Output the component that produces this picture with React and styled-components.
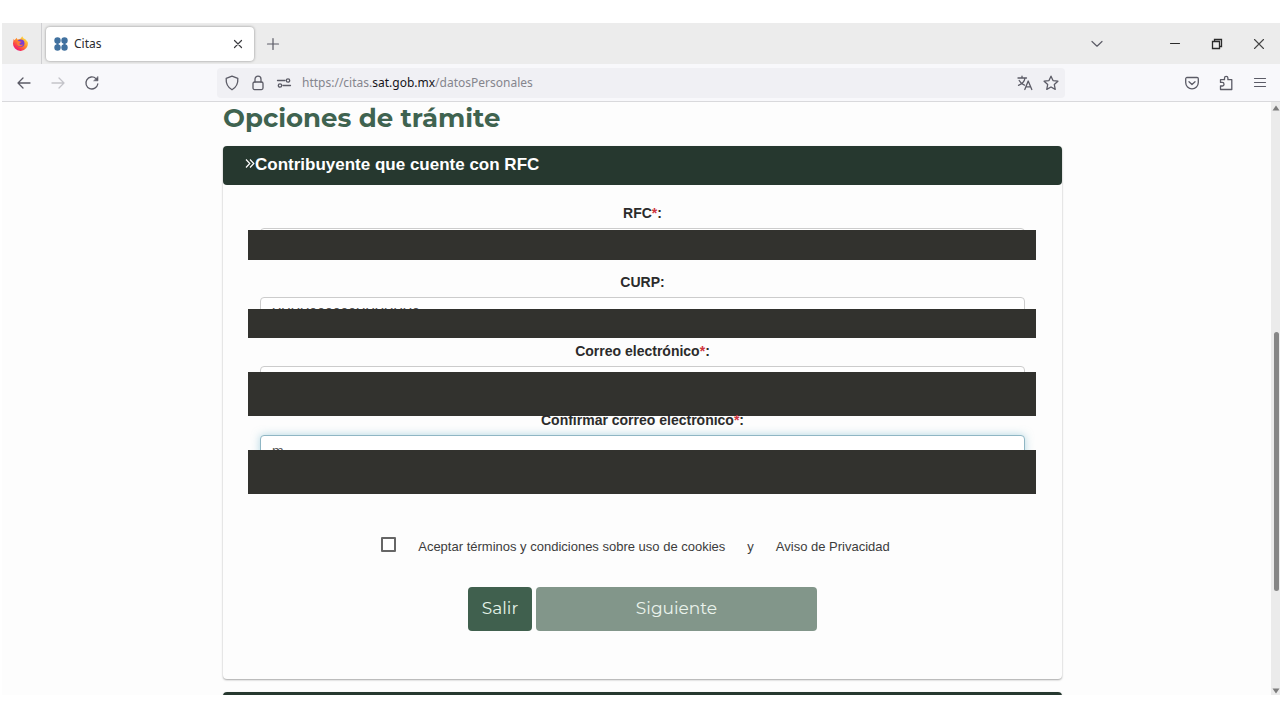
import React, { useState } from 'react'
import styled, { createGlobalStyle } from 'styled-components'

const GlobalStyle = createGlobalStyle`
    * {
        box-sizing: border-box;
    }

    body {
        margin: 0;
        background: #ffffff;
        font-family: "Liberation Sans", Arial, sans-serif;
    }

    button, input {
        font-family: inherit;
        margin: 0;
    }

    svg {
        flex: none;
    }
`

const Screen = styled.div`
    height: 100vh;
    padding: 23px 0 25px 2px;
    display: flex;
    flex-direction: column;
`

/* browser chrome */

const TabStrip = styled.header`
    flex: none;
    height: 41px;
    display: flex;
    align-items: center;
    background: #ececec;
`

const PinnedTab = styled.button`
    width: 40px;
    height: 41px;
    padding: 0 3px 0 0;
    display: flex;
    align-items: center;
    justify-content: center;
    border: none;
    border-right: 1px solid #cfcfd2;
    background: none;
`

const Tab = styled.div`
    width: 208px;
    height: 34px;
    margin: 0 0 0 4px;
    padding: 0 4px 0 8px;
    display: flex;
    align-items: center;
    gap: 6px;
    border-radius: 4px;
    background: #ffffff;
    box-shadow: 0 0 3px rgba(0, 0, 0, 0.4);
`

const TabTitle = styled.span`
    flex: 1;
    font-family: "Noto Sans", sans-serif;
    font-size: 12px;
    line-height: 18px;
    color: #2a2a2e;
`

const IconButton = styled.button`
    width: 24px;
    height: 24px;
    padding: 0;
    display: flex;
    align-items: center;
    justify-content: center;
    border: none;
    background: none;
    color: ${props => props.$color || '#5b5b66'};
    cursor: pointer;
`

const NewTab = styled(IconButton)`
    margin-left: 7px;
`

const WindowControls = styled.div`
    margin-left: auto;
    display: flex;
    align-items: center;
`

const WindowButton = styled(IconButton)`
    width: 42px;
`

const TabList = styled(WindowButton)`
    margin-right: 36px;
`

const Toolbar = styled.nav`
    flex: none;
    height: 38px;
    display: grid;
    grid-template-columns: 1fr minmax(0, 848px) 1fr;
    align-items: center;
    background: #f8f8fb;
    border-bottom: 1px solid #d9d9dc;
`

const ToolGroup = styled.div`
    display: flex;
    gap: 10px;
    padding: 0 8px 0 10px;
    justify-content: ${props => props.$end ? 'flex-end' : 'flex-start'};
`

const AddressBar = styled.div`
    height: 30px;
    padding: 0 2px 0 3px;
    display: flex;
    align-items: center;
    gap: 2px;
    border-radius: 4px;
    background: #f0f0f4;
`

const Address = styled.div`
    flex: 1;
    padding-left: 4px;
    font-family: "Noto Sans", sans-serif;
    font-size: 12px;
    line-height: 18px;
    color: #85858d;
    white-space: nowrap;
`

const Domain = styled.span`
    color: #15141a;
`

/* page */

const Viewport = styled.div`
    flex: 1;
    min-height: 0;
    display: flex;
    background: #fdfdfd;
`

const Page = styled.main`
    flex: 1;
    overflow: hidden;
    padding-left: 12px;
`

const Content = styled.div`
    max-width: 839px;
    margin: 0 auto;
`

const Title = styled.h1`
    margin: 0;
    height: 44px;
    font-family: Montserrat, Inter, sans-serif;
    font-size: 26px;
    font-weight: 700;
    line-height: 32px;
    color: #3f6350;
`

const Panel = styled.section`
    margin-bottom: 13px;
    border-radius: 4px;
    background: #fdfdfd;
    box-shadow: 0 1px 2px rgba(0, 0, 0, 0.35);
`

const PanelHeader = styled.h2`
    margin: 0;
    height: 39px;
    padding: 0 22px 2px;
    display: flex;
    align-items: center;
    border-radius: 4px;
    background: #26382f;
    color: #ffffff;
    font-size: 17px;
    line-height: 20px;
`

const Form = styled.form`
    padding: 18px 37px 48px;
`

const Field = styled.div`
    position: relative;
    height: 69px;
`

const Label = styled.label`
    display: block;
    height: 25px;
    font-size: 14px;
    font-weight: bold;
    line-height: 20px;
    text-align: center;
    color: #2b2b2b;
`

const Required = styled.span`
    color: #d0343f;
`

const Input = styled.input`
    display: block;
    width: 100%;
    height: 32px;
    padding: 0 11px;
    border: 1px solid ${props => props.$active ? '#8fb6c4' : '#cccccc'};
    border-radius: 4px;
    background: #ffffff;
    box-shadow: ${props => props.$active ? '0 0 8px rgba(102, 175, 200, 0.5)' : 'none'};
    font-size: 14px;
    color: #555555;
    outline: none;
`

const Cover = styled.div`
    position: absolute;
    left: -12px;
    right: -11px;
    top: ${props => props.$top}px;
    height: ${props => props.$height}px;
    background: #32322e;
`

const Terms = styled.div`
    margin: 55px 14px 0 0;
    height: 24px;
    display: flex;
    align-items: center;
    justify-content: center;
    gap: 22px;
    font-size: 13px;
    color: #3c3c3c;
`

const Checkbox = styled.input`
    appearance: none;
    width: 15px;
    height: 15px;
    margin-bottom: 3px;
    border: 2px solid #666666;
    border-radius: 1px;
    background: #ffffff;

    &:checked {
        background: #3f6350;
    }
`

const Link = styled.a`
    color: inherit;
    text-decoration: none;
`

const Actions = styled.div`
    margin-top: 29px;
    display: flex;
    justify-content: center;
    gap: 4px;
`

const Button = styled.button`
    width: ${props => props.$wide ? 281 : 64}px;
    height: 44px;
    padding: 0 0 2px;
    border: none;
    border-radius: 4px;
    background: ${props => props.$wide ? '#82968a' : '#40604e'};
    color: ${props => props.$wide ? '#eaf3ec' : '#e4f3e8'};
    font-family: Montserrat, Inter, sans-serif;
    font-size: 17px;
`

const Scrollbar = styled.div`
    width: 9px;
    padding: 2px 0 0;
    display: flex;
    flex-direction: column;
    align-items: center;
    background: #ebebeb;
`

const Space = styled.div`
    flex: ${props => props.$grow} 0 0;
`

const Thumb = styled.div`
    flex: 258 0 0;
    width: 5px;
    margin-left: 2px;
    border-radius: 3px;
    background: #868686;
`

const Icon = ({ size = 16, width = 1.3, children }) => (
    <svg width={size} height={size} viewBox="0 0 16 16" fill="none" stroke="currentColor"
        strokeWidth={width} strokeLinecap="round" strokeLinejoin="round" aria-hidden="true">
        {children}
    </svg>
)

const FirefoxLogo = () => (
    <svg width="17" height="17" viewBox="0 0 16 16" aria-hidden="true">
        <defs>
            <linearGradient id="flame" x1="0.85" y1="0.1" x2="0.2" y2="0.95">
                <stop offset="0" stopColor="#ffe23f" />
                <stop offset="0.45" stopColor="#ff8a2b" />
                <stop offset="0.8" stopColor="#fb3550" />
                <stop offset="1" stopColor="#e31587" />
            </linearGradient>
        </defs>
        <path d="M1.6 3.6 2.4 5 4.4 2.6 5 4.2 8 3.6 9.6 1.2 11 3.2 12.6 4 14.8 6.6A7 7 0 1 1 1 7.2Z" fill="url(#flame)" />
        <circle cx="8.2" cy="7.8" r="3.5" fill="#7b3fd1" />
        <path d="M4.6 6.2C6 5 7.4 6.6 9 6.2 8.6 7.4 7 7.4 7 8.4 7.6 9.6 9.4 9.4 10.4 8.6 10 10.8 6.4 11.6 4.8 9.2Z" fill="#ff7a35" />
    </svg>
)

const CitasLogo = () => (
    <svg width="14" height="14" viewBox="0 0 14 14" fill="#41719f" aria-hidden="true">
        <circle cx="3.5" cy="3.5" r="3.2" />
        <circle cx="10.5" cy="3.5" r="3.2" />
        <circle cx="3.5" cy="10.5" r="3.2" />
        <circle cx="10.5" cy="10.5" r="3.2" />
        <path d="M2.5 3h2v8h-2zM9.5 3h2v8h-2z" />
    </svg>
)

const Arrow = ({ down }) => (
    <svg width="9" height="8" viewBox="0 0 9 8" fill="#7c7c7c" aria-hidden="true">
        <path d={down ? 'M1.5 1.5h7L5 6.5z' : 'M1.5 6.5h7L5 1.5z'} />
    </svg>
)

const FormField = ({ id, label, required, value, active, top, height }) => {
    const [text, setText] = useState(value || '')

    return (
        <Field>
            <Label htmlFor={id}>{label}{required && <Required>*</Required>}:</Label>
            <Input id={id} value={text} $active={active} onChange={e => setText(e.target.value)} />
            <Cover $top={top} $height={height} />
        </Field>
    )
}

const Browser = () => (
    <>
        <TabStrip>
            <PinnedTab aria-label="Firefox"><FirefoxLogo /></PinnedTab>
            <Tab>
                <CitasLogo />
                <TabTitle>Citas</TabTitle>
                <IconButton aria-label="Cerrar pestaña" $color="#3c3c40">
                    <Icon size={14} width={1.4}><path d="M4 4l8 8M12 4l-8 8" /></Icon>
                </IconButton>
            </Tab>
            <NewTab aria-label="Nueva pestaña">
                <Icon width={1.2}><path d="M8 2.5v11M2.5 8h11" /></Icon>
            </NewTab>
            <WindowControls>
                <TabList aria-label="Listar pestañas">
                    <Icon width={1.2}><path d="M3 5.5 8 10.2l5-4.7" /></Icon>
                </TabList>
                <WindowButton $color="#2a2a2a" aria-label="Minimizar">
                    <Icon width={1.1}><path d="M3.5 7.5h9" /></Icon>
                </WindowButton>
                <WindowButton $color="#2a2a2a" aria-label="Restaurar">
                    <svg width="12" height="12" viewBox="0 0 12 12" fill="none" stroke="currentColor" strokeWidth="1.3" aria-hidden="true">
                        <path d="M1.5 3.5h7v7h-7zM3.5 3.5v-2h7v7h-2" />
                    </svg>
                </WindowButton>
                <WindowButton $color="#444444" aria-label="Cerrar">
                    <Icon width={1.1}><path d="M3.5 3.5l9 9M12.5 3.5l-9 9" /></Icon>
                </WindowButton>
            </WindowControls>
        </TabStrip>
        <Toolbar>
            <ToolGroup>
                <IconButton aria-label="Atrás">
                    <Icon><path d="M14 8H2M7 3 2 8l5 5" /></Icon>
                </IconButton>
                <IconButton aria-label="Adelante" $color="#c3c3c9">
                    <Icon><path d="M2 8h12M9 3l5 5-5 5" /></Icon>
                </IconButton>
                <IconButton aria-label="Recargar">
                    <Icon>
                        <path d="M13.8 9A6 6 0 1 1 12 3.6" />
                        <path d="M14 1.8v4H10z" fill="currentColor" strokeWidth="0.6" />
                    </Icon>
                </IconButton>
            </ToolGroup>
            <AddressBar>
                <IconButton aria-label="Protección">
                    <Icon><path d="M8 1.2 13.8 3.4c.4 5-1.6 9-5.8 11.4C3.8 12.4 1.8 8.4 2.2 3.4z" /></Icon>
                </IconButton>
                <IconButton aria-label="Conexión segura">
                    <Icon>
                        <rect x="3" y="7" width="10" height="7.6" rx="1.5" />
                        <path d="M5 7V4.2a3 3 0 0 1 6 0V7" />
                    </Icon>
                </IconButton>
                <IconButton aria-label="Permisos">
                    <Icon>
                        <path d="M1.5 5.5h7.5M7 10.5h7.5" />
                        <circle cx="12" cy="5.5" r="1.7" />
                        <circle cx="4" cy="10.5" r="1.7" />
                    </Icon>
                </IconButton>
                <Address>https://citas.<Domain>sat.gob.mx</Domain>/datosPersonales</Address>
                <IconButton aria-label="Traducir">
                    <Icon>
                        <path d="M1 3h8.5M5 1.2V3M2.2 5.5C3.5 8 5.5 9.5 7.5 10.2M8 3C7.5 6.5 5 9 1.5 10.3M7.8 14.5 11.2 6l3.6 8.5M9 11.8h4.5" />
                    </Icon>
                </IconButton>
                <IconButton aria-label="Añadir a marcadores">
                    <Icon><path d="M8 1.2l2 4.4 4.9.6-3.6 3.3.95 4.9L8 12l-4.25 2.4.95-4.9L1.1 6.2 6 5.6z" /></Icon>
                </IconButton>
            </AddressBar>
            <ToolGroup $end>
                <IconButton aria-label="Pocket">
                    <Icon>
                        <path d="M3 2.5h10A1.3 1.3 0 0 1 14.3 3.8V7.5a6.3 6.3 0 0 1-12.6 0V3.8A1.3 1.3 0 0 1 3 2.5z" />
                        <path d="M5 6.7l3 2.8 3-2.8" />
                    </Icon>
                </IconButton>
                <IconButton aria-label="Extensiones">
                    <Icon>
                        <path d="M2.5 14.5V11h1.7a1.8 1.8 0 0 0 0-3.6H2.5V4.7h4V3a1.7 1.7 0 0 1 3.4 0v1.7h3.9v9.8z" />
                    </Icon>
                </IconButton>
                <IconButton aria-label="Menú">
                    <Icon width={1.2}><path d="M2.5 3.5h11M2.5 7.5h11M2.5 11.5h11" /></Icon>
                </IconButton>
            </ToolGroup>
        </Toolbar>
    </>
)

const App = () => {
    const [accepted, setAccepted] = useState(false)

    return (
        <Screen>
            <GlobalStyle />
            <Browser />
            <Viewport>
                <Page>
                    <Content>
                        <Title>Opciones de trámite</Title>
                        <Panel>
                            <PanelHeader>
                                <svg width="10" height="12" viewBox="0 0 10 12" fill="none" stroke="#ffffff" strokeWidth="1.2" aria-hidden="true">
                                    <path d="M1 0.5 4.8 4.5 1 8.5M5 0.5 8.8 4.5 5 8.5" />
                                </svg>
                                Contribuyente que cuente con RFC
                            </PanelHeader>
                            <Form onSubmit={e => e.preventDefault()}>
                                <FormField id="rfc" label="RFC" required top={27} height={30} />
                                <FormField id="curp" label="CURP" value="XXXX000000XXXXXX0" top={37} height={29} />
                                <FormField id="correo" label="Correo electrónico" required top={31} height={44} />
                                <FormField id="confirmar" label="Confirmar correo electrónico" required active value="m" top={40} height={44} />
                                <Terms>
                                    <Checkbox id="terminos" type="checkbox" checked={accepted} onChange={e => setAccepted(e.target.checked)} />
                                    <label htmlFor="terminos">Aceptar términos y condiciones sobre uso de cookies</label>
                                    <span>y</span>
                                    <Link href="#privacidad">Aviso de Privacidad</Link>
                                </Terms>
                                <Actions>
                                    <Button type="button">Salir</Button>
                                    <Button type="submit" $wide>Siguiente</Button>
                                </Actions>
                            </Form>
                        </Panel>
                        <Panel>
                            <PanelHeader />
                        </Panel>
                    </Content>
                </Page>
                <Scrollbar>
                    <Arrow />
                    <Space $grow={220} />
                    <Thumb />
                    <Space $grow={96} />
                    <Arrow down />
                </Scrollbar>
            </Viewport>
        </Screen>
    )
}

export default App
